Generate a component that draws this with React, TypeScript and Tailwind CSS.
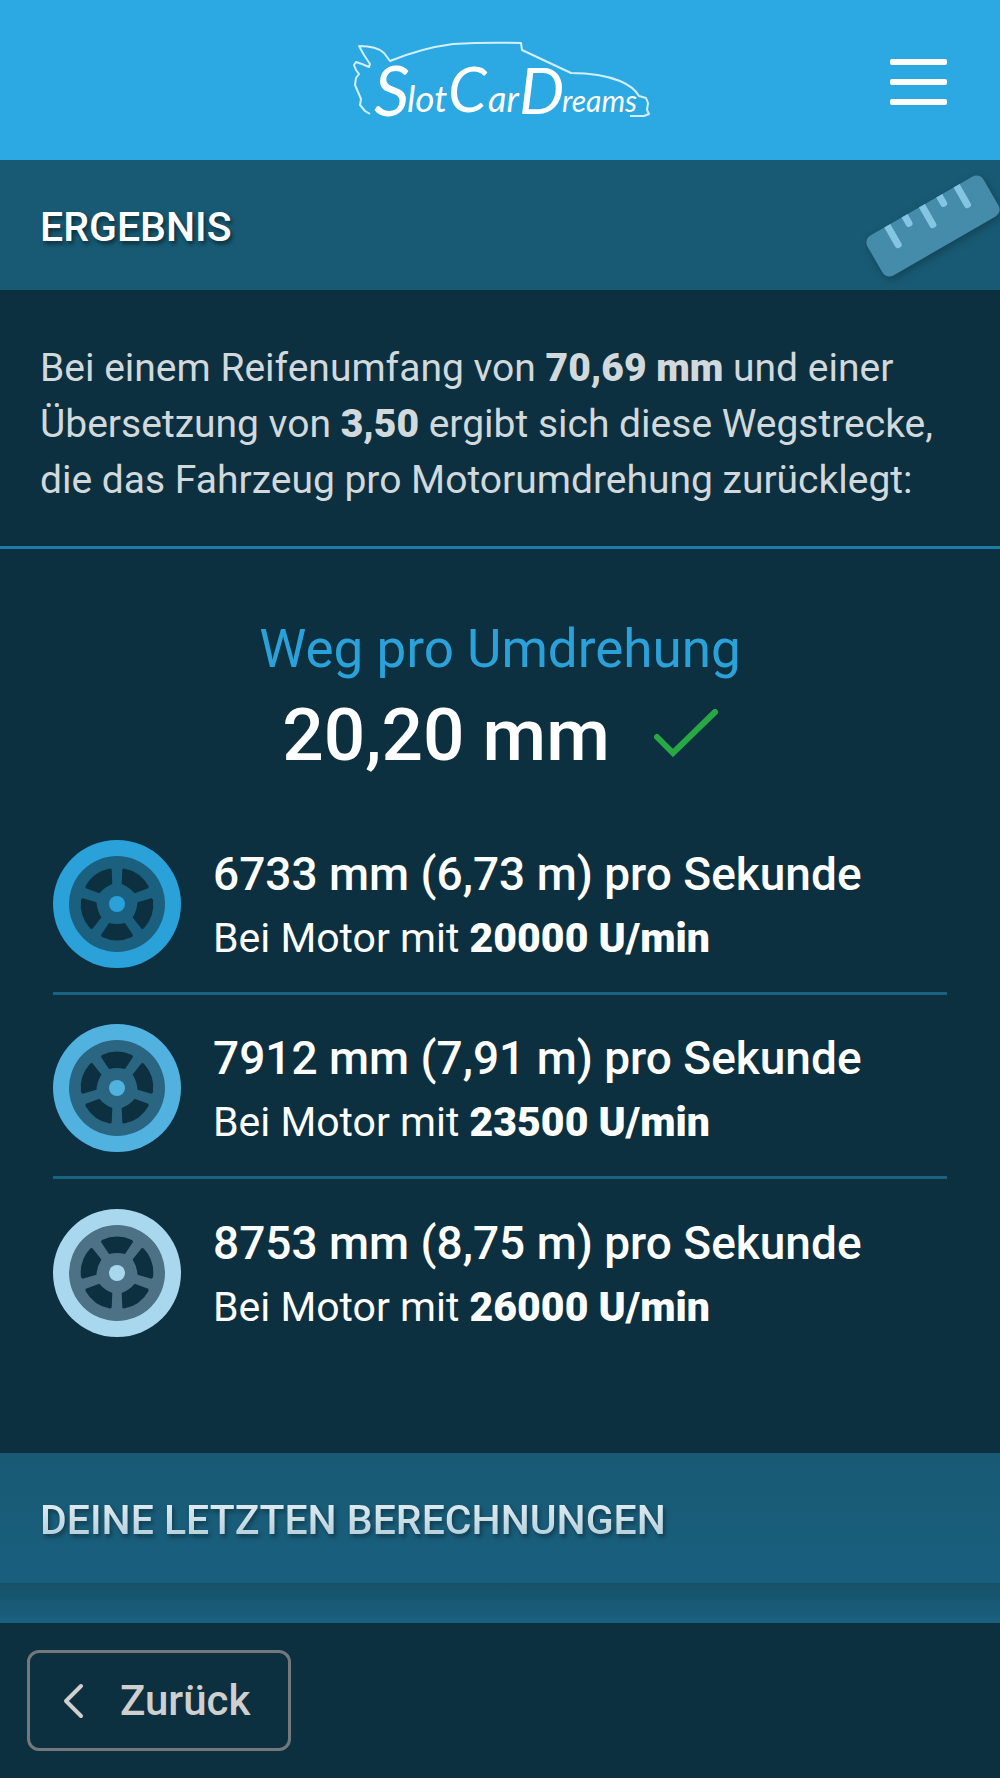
import React from 'react';

interface MotorResult {
  distance: string;
  rpm: string;
  ring: string;
  rim: string;
  flipped: boolean;
}

const results: MotorResult[] = [
  { distance: '6733 mm (6,73 m) pro Sekunde', rpm: '20000 U/min', ring: '#2aa1d9', rim: '#1b607f', flipped: false },
  { distance: '7912 mm (7,91 m) pro Sekunde', rpm: '23500 U/min', ring: '#52b2df', rim: '#2a6681', flipped: true },
  { distance: '8753 mm (8,75 m) pro Sekunde', rpm: '26000 U/min', ring: '#a9d8ee', rim: '#4d7285', flipped: true },
];

const Logo: React.FC = () => (
  <svg
    viewBox="0 0 320 100"
    className="w-[320px] h-[100px]"
    fill="none"
    role="img"
    aria-label="SlotCarDreams"
  >
    <path
      d="M30 84 L25 81 L20 75 L21 69 L18 62 L15 55 L16 48 L19 44 L16 40 L14 35 L16 32 L22 34 L29 37 L30 34 L24 25 L19 16 Q37 16 44 23 L50 31 Q82 18 113 14 Q145 12 181 13 L182 20 L231 43 Q260 43 280 51 Q294 57 299 66 L306 68 L308 73 L307 80 L309 84 L304 86 L290 86"
      stroke="#d3effb"
      strokeWidth="2"
      strokeLinejoin="round"
    />
    <g fill="#fff" fontFamily="Lato, 'Liberation Sans', sans-serif" fontStyle="italic">
      <text x="34" y="86" fontSize="70">S</text>
      <text x="67" y="82" fontSize="37">lot</text>
      <text x="108" y="82" fontSize="62">C</text>
      <text x="148" y="82" fontSize="36">ar</text>
      <text x="179" y="84" fontSize="64">D</text>
      <text x="222" y="82" fontSize="30">reams</text>
    </g>
  </svg>
);

const Ruler: React.FC = () => (
  <svg viewBox="0 0 140 130" className="w-[140px] h-[130px] shrink-0 drop-shadow-[2px_3px_4px_rgba(0,0,0,0.25)]" aria-hidden="true">
    <g transform="translate(73 66) rotate(-30)">
      <rect x="-67" y="-23" width="134" height="46" rx="8" fill="#458caa" />
      {[-40, 0, 40].map((x) => (
        <path key={x} d={`M${x - 3} -23 h7 v22 a3 3 0 0 1 -3 3 h-1 a3 3 0 0 1 -3 -3 z`} fill="#83c5e3" />
      ))}
      {[-20, 20].map((x) => (
        <path key={x} d={`M${x - 3} -23 h7 v9 a3 3 0 0 1 -3 3 h-1 a3 3 0 0 1 -3 -3 z`} fill="#83c5e3" />
      ))}
    </g>
  </svg>
);

const Wheel: React.FC<{ ring: string; rim: string; flipped: boolean }> = ({ ring, rim, flipped }) => (
  <svg viewBox="-64 -64 128 128" className="w-32 h-32 shrink-0" aria-hidden="true">
    <circle r="64" fill={ring} />
    <circle r="48" fill={rim} />
    {[0, 72, 144, 216, 288].map((angle) => (
      <path
        key={angle}
        d="M-8 19 Q0 21 8 19 L16 31 Q16 32 15 33 A36 36 0 0 1 -15 33 Q-16 32 -16 31 Z"
        fill="#0d3040"
        transform={`rotate(${flipped ? angle + 180 : angle})`}
      />
    ))}
    <circle r="8" fill={ring} />
  </svg>
);

export default function App() {
  return (
    <div className="min-h-screen flex flex-col bg-[#0d3040] text-white font-[Roboto,'Liberation_Sans',sans-serif]">
      {/* Header */}
      <header className="h-40 grid grid-cols-[1fr_auto_1fr] items-center bg-[#2ca9e3]">
        <a href="#" className="col-start-2">
          <Logo />
        </a>
        <button aria-label="Menü" className="justify-self-end mr-[53px] pt-1 flex flex-col gap-[14px]">
          <span className="w-[57px] h-[6px] rounded-xs bg-white" />
          <span className="w-[57px] h-[6px] rounded-xs bg-white" />
          <span className="w-[57px] h-[6px] rounded-xs bg-white" />
        </button>
      </header>

      <main className="flex-1 flex flex-col">
        {/* Result heading */}
        <div className="h-[130px] pl-10 flex items-center justify-between overflow-hidden bg-[#185a74]">
          <h1 className="pt-1 text-[41px] leading-[56px] font-medium text-shadow-[2px_3px_4px_rgba(0,0,0,0.5)]">ERGEBNIS</h1>
          <Ruler />
        </div>

        <p className="px-10 pt-[50px] pb-[38px] border-b-3 border-[#1f7ba8] text-[39px] leading-[56px] text-[#d1d9dc]">
          Bei einem Reifenumfang von <b className="font-black">70,69 mm</b> und einer Übersetzung von{' '}
          <b className="font-black">3,50</b> ergibt sich diese Wegstrecke, die das Fahrzeug pro Motorumdrehung zurücklegt:
        </p>

        {/* Distance per turn */}
        <section className="pt-[62px] flex flex-col items-center">
          <h2 className="text-[53px] leading-[76px] text-[#2aa1d9]">Weg pro Umdrehung</h2>
          <div className="flex items-center gap-11">
            <span className="text-[73px] leading-[96px] font-medium">20,20 mm</span>
            <svg viewBox="0 0 64 48" className="w-16 h-12 mb-1" fill="none" aria-hidden="true">
              <path d="M3 28 L19 44 L61 3" stroke="#28a745" strokeWidth="6" strokeLinecap="round" />
            </svg>
          </div>
        </section>

        <ul className="mx-[53px] mt-7 mb-[90px] flex flex-col divide-y-3 divide-[#196380]">
          {results.map((result) => (
            <li key={result.rpm} className="h-[184px] pt-1 flex items-center gap-8">
              <Wheel ring={result.ring} rim={result.rim} flipped={result.flipped} />
              <div className="pt-1">
                <div className="text-[46px] leading-[64px] font-medium">{result.distance}</div>
                <div className="text-[41px] leading-[64px]">
                  Bei Motor mit <b className="font-black">{result.rpm}</b>
                </div>
              </div>
            </li>
          ))}
        </ul>

        {/* Recent calculations */}
        <div className="h-[130px] px-10 flex items-center bg-linear-to-b from-[#185a74] to-[#195f7e]">
          <h2 className="pt-1 text-[41px] leading-[56px] font-medium text-transparent bg-clip-text bg-linear-to-b from-[#f4f8fa] to-[#a6c6d3] drop-shadow-[2px_3px_2px_rgba(0,0,0,0.35)]">
            DEINE LETZTEN BERECHNUNGEN
          </h2>
        </div>
        <div className="h-10 bg-linear-to-b from-[#175168] to-[#196080]" />
      </main>

      {/* Footer */}
      <footer className="sticky bottom-0 px-[27px] py-[27px] bg-[#0d3040]">
        <button className="h-[101px] pl-8 pr-[38px] flex items-center gap-9 border-3 border-[#73787d] rounded-xl text-[42px] leading-[56px] font-medium text-[#cfcfcf]">
          <svg viewBox="0 0 22 36" className="w-[22px] h-9" fill="none" aria-hidden="true">
            <path d="M19 3 L4 18 L19 33" stroke="currentColor" strokeWidth="4" strokeLinecap="round" strokeLinejoin="round" />
          </svg>
          Zurück
        </button>
      </footer>
    </div>
  );
}
